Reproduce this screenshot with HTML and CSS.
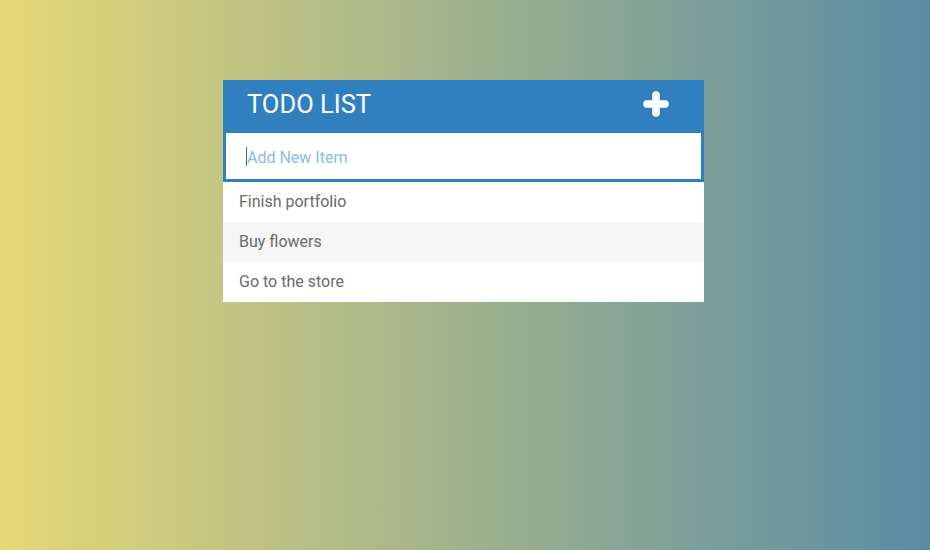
FILE: index.html
```html
<!DOCTYPE html>
<html>
<head>
<meta charset="utf-8">
<link rel="stylesheet" href="styles.css">
</head>
<body>
<div class="card">
  <div class="header">
    <h1 class="title">TODO LIST</h1>
    <svg class="plus" width="26" height="26" viewBox="0 0 26 26"><path d="M13 4 V22 M4 13 H22" stroke="#fff" stroke-width="7.5" stroke-linecap="round" fill="none"/></svg>
  </div>
  <div class="input-wrap">
    <span class="caret"></span><span class="placeholder">Add New Item</span>
  </div>
  <ul class="list">
    <li class="item">Finish portfolio</li>
    <li class="item alt">Buy flowers</li>
    <li class="item">Go to the store</li>
  </ul>
</div>
</body>
</html>
```
FILE: styles.css
```css
html, body {
  margin: 0;
  height: 100%;
}
body {
  background: linear-gradient(to right, #e5d877, #5a8ca4);
  font-family: Roboto, "Liberation Sans", sans-serif;
  padding-top: 80px;
  box-sizing: border-box;
}
.card {
  width: 481px;
  margin-left: 223px;
  background: #fff;
}
.header {
  height: 53px;
  box-sizing: border-box;
  background: #3080c0;
  display: flex;
  align-items: center;
  justify-content: space-between;
  padding: 0 35px 5px 24px;
}
.title {
  margin: 0;
  font-weight: 400;
  font-size: 25.5px;
  color: #fff;
}
.plus {
  display: block;
}
.input-wrap {
  height: 49px;
  box-sizing: border-box;
  border: 3px solid #3080c0;
  border-top: 0;
  background: #fff;
  display: flex;
  align-items: center;
  padding-left: 20px;
}
.caret {
  width: 1px;
  height: 19px;
  background: #2f6fb0;
}
.placeholder {
  font-size: 16px;
  color: #8dbbe2;
  padding-top: 2px;
}
.list {
  list-style: none;
  margin: 0;
  padding: 0;
}
.item {
  height: 40px;
  line-height: 40px;
  padding-left: 16px;
  font-size: 16px;
  color: #6a6a6a;
  background: #fff;
}
.item.alt {
  background: #f6f6f6;
}
```
